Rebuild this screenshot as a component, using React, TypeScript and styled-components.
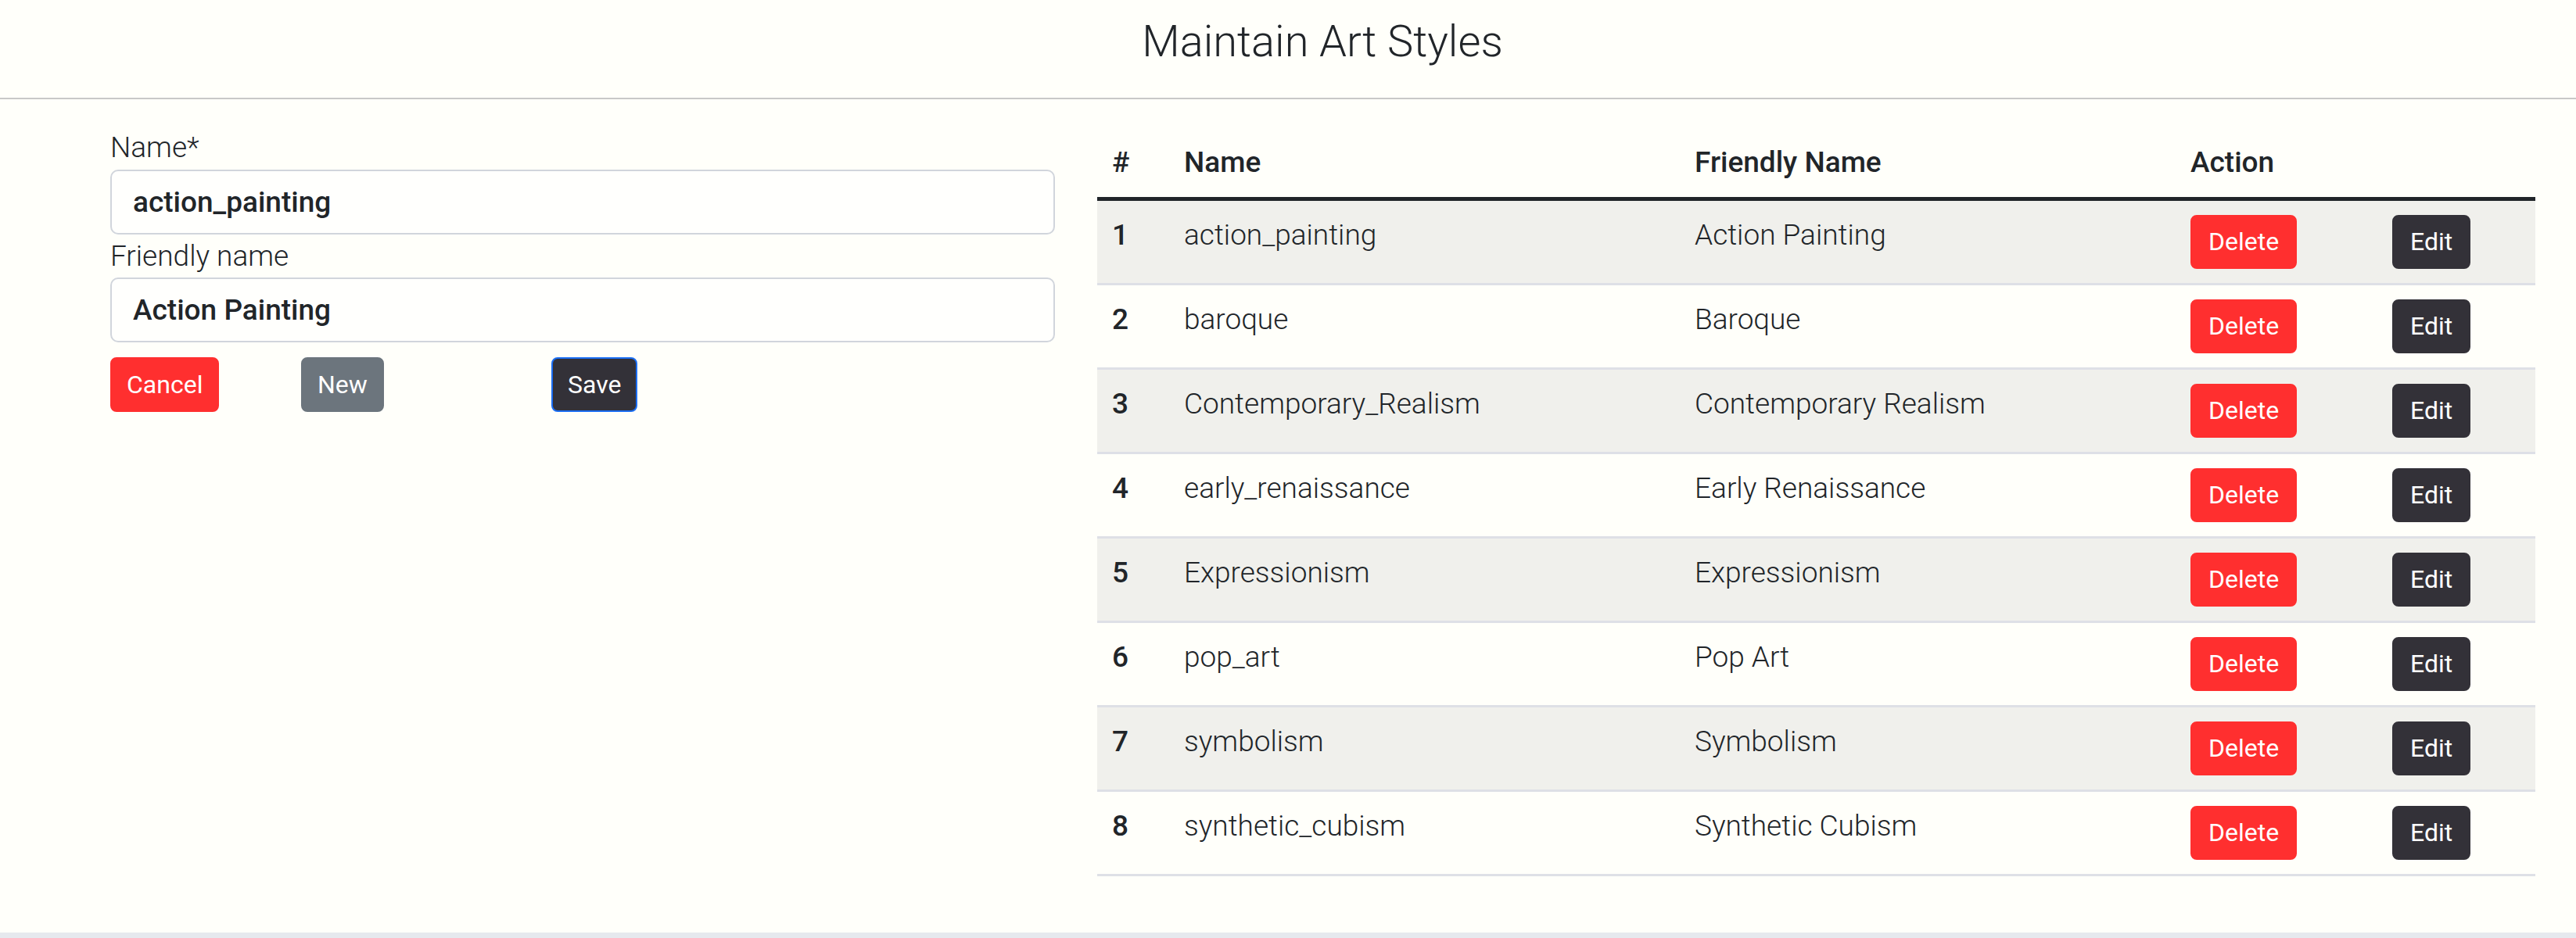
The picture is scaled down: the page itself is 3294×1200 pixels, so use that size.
import React from "react";
import styled, { createGlobalStyle } from "styled-components";

const GlobalStyle = createGlobalStyle`
  html, body { margin: 0; padding: 0; background: #fffffa; }
  body { font-family: Roboto, "Liberation Sans", sans-serif; color: #212529; }
  *, *::before, *::after { box-sizing: border-box; }
`;

const Page = styled.div`
  min-height: 100vh;
  display: flex;
  flex-direction: column;
  background: #fffffa;
`;

const Header = styled.header`
  height: 127px;
  padding: 20px 0 0 88px;
  border-bottom: 2px solid #c8c8c8;
  text-align: center;
`;

const Title = styled.h1`
  margin: 0;
  font-size: 56px;
  line-height: 1.2;
  font-weight: 300;
  color: #212529;
`;

const Main = styled.main`
  flex: 1;
  display: flex;
  align-items: flex-start;
  gap: 54px;
  padding: 34px 52px 0 141px;
`;

const FormColumn = styled.section`
  width: 1208px;
  flex: none;
  display: flex;
  flex-direction: column;
`;

const Label = styled.label`
  display: block;
  font-size: 37px;
  line-height: 1.5;
  font-weight: 300;
  color: #212529;
`;

const Input = styled.input`
  display: block;
  width: 100%;
  height: 83px;
  padding: 0 27px;
  font: 500 37px Roboto, "Liberation Sans", sans-serif;
  color: #212529;
  background: #fffffd;
  border: 2px solid #d1d5dc;
  border-radius: 10px;
  outline: none;
`;

const ButtonRow = styled.div`
  display: grid;
  grid-template-columns: 244px 320px auto;
  justify-items: start;
  margin-top: 19px;
`;

type Variant = "danger" | "secondary" | "dark";

const bg: Record<Variant, string> = {
  danger: "#ff2f2f",
  secondary: "#6c757d",
  dark: "#333138",
};

const Button = styled.button<{ $variant: Variant; $focused?: boolean; $pad?: number }>`
  display: inline-flex;
  align-items: center;
  justify-content: center;
  height: 70px;
  padding: 0 ${(p) => p.$pad ?? 19}px;
  font: 400 32px Roboto, "Liberation Sans", sans-serif;
  color: #fff;
  background: ${(p) => bg[p.$variant]};
  border: 2px solid ${(p) => (p.$focused ? "#1b6ef3" : bg[p.$variant])};
  border-radius: 8px;
  cursor: pointer;
`;

const TableColumn = styled.section`
  flex: 1;
  padding-top: 3px;
`;

const Table = styled.table`
  width: 100%;
  border-collapse: collapse;
  table-layout: fixed;
  font-size: 37px;
  line-height: 1.5;
  color: #212529;
`;

const Col = styled.col<{ $w?: number }>`
  width: ${(p) => (p.$w ? `${p.$w}px` : "auto")};
`;

const HeadRow = styled.tr`
  border-bottom: 5px solid #212529;
`;

const HeadCell = styled.th`
  text-align: left;
  font-weight: 500;
  padding: 16px 19px;
`;

const Row = styled.tr<{ $striped: boolean }>`
  background: ${(p) => (p.$striped ? "#f0f0ec" : "transparent")};
  border-bottom: 3px solid #dee0e6;
`;

const RowHead = styled.th`
  text-align: left;
  font-weight: 500;
  vertical-align: top;
  padding: 16px 19px 18px;
`;

const Cell = styled.td`
  vertical-align: top;
  font-weight: 300;
  padding: 16px 19px 18px;
`;

const ActionButton = styled(Button)`
  height: 69px;
  margin-top: 2px;
`;

const Footer = styled.footer`
  height: 7px;
  background: #e6e9ee;
`;

const styles = [
  ["action_painting", "Action Painting"],
  ["baroque", "Baroque"],
  ["Contemporary_Realism", "Contemporary Realism"],
  ["early_renaissance", "Early Renaissance"],
  ["Expressionism", "Expressionism"],
  ["pop_art", "Pop Art"],
  ["symbolism", "Symbolism"],
  ["synthetic_cubism", "Synthetic Cubism"],
];

export default function App() {
  return (
    <Page>
      <GlobalStyle />
      <Header>
        <Title>Maintain Art Styles</Title>
      </Header>
      <Main>
        <FormColumn>
          <Label htmlFor="name">Name*</Label>
          <Input id="name" defaultValue="action_painting" />
          <Label htmlFor="friendly">Friendly name</Label>
          <Input id="friendly" defaultValue="Action Painting" />
          <ButtonRow>
            <Button $variant="danger">Cancel</Button>
            <Button $variant="secondary">New</Button>
            <Button $variant="dark" $focused>
              Save
            </Button>
          </ButtonRow>
        </FormColumn>
        <TableColumn>
          <Table>
            <colgroup>
              <Col $w={92} />
              <Col $w={653} />
              <Col $w={634} />
              <Col $w={258} />
              <Col />
            </colgroup>
            <thead>
              <HeadRow>
                <HeadCell>#</HeadCell>
                <HeadCell>Name</HeadCell>
                <HeadCell>Friendly Name</HeadCell>
                <HeadCell>Action</HeadCell>
                <HeadCell />
              </HeadRow>
            </thead>
            <tbody>
              {styles.map(([name, friendly], i) => (
                <Row key={name} $striped={i % 2 === 0}>
                  <RowHead>{i + 1}</RowHead>
                  <Cell>{name}</Cell>
                  <Cell>{friendly}</Cell>
                  <Cell>
                    <ActionButton $variant="danger" $pad={21}>
                      Delete
                    </ActionButton>
                  </Cell>
                  <Cell>
                    <ActionButton $variant="dark" $pad={21}>
                      Edit
                    </ActionButton>
                  </Cell>
                </Row>
              ))}
            </tbody>
          </Table>
        </TableColumn>
      </Main>
      <Footer />
    </Page>
  );
}
